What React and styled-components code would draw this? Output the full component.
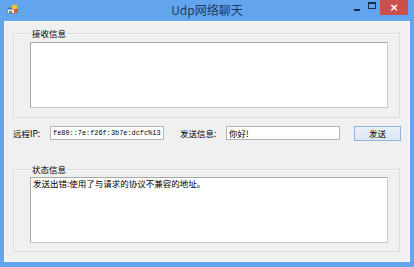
import React from "react";
import styled, { createGlobalStyle } from "styled-components";

const Global = createGlobalStyle`
  html, body { margin: 0; padding: 0; background: #62a5ee; }
  #root { width: 414px; height: 267px; }
  * { box-sizing: border-box; }
`;

const Window = styled.div`
  width: 414px;
  height: 267px;
  background: #62a5ee;
  display: flex;
  flex-direction: column;
  font-family: "Noto Sans CJK SC", "Liberation Sans", sans-serif;
  overflow: hidden;
`;

const TitleBar = styled.div`
  height: 21px;
  flex: none;
  display: flex;
  align-items: flex-start;
  position: relative;
`;

const AppIcon = styled.svg`
  margin: 4px 0 0 7px;
  flex: none;
`;

const Title = styled.div`
  position: absolute;
  left: 0;
  right: 0;
  top: 2px;
  text-align: center;
  font-size: 12px;
  line-height: 16px;
  color: #1f3a5f;
  pointer-events: none;
`;

const Controls = styled.div`
  margin-left: auto;
  margin-right: 6px;
  display: flex;
  align-items: flex-start;
  flex: none;
`;

const CtrlBtn = styled.div`
  width: ${(p) => p.$w}px;
  height: 15px;
  flex: none;
  display: flex;
  align-items: center;
  justify-content: center;
  background: ${(p) => (p.$close ? "#c9504c" : "transparent")};
  color: #fff;
  font-family: "DejaVu Sans", sans-serif;
  font-weight: bold;
  font-size: 11px;
`;

const MinGlyph = styled.div`
  width: 6px;
  height: 2px;
  background: #1d2f46;
  margin-top: 5px;
`;

const MaxGlyph = styled.div`
  width: 8px;
  height: 7px;
  border: 1px solid #1d2f46;
  border-top-width: 2px;
  margin-top: -4px;
`;

const Client = styled.div`
  flex: 1;
  margin: 0 4px 5px 4px;
  background: #f0f0f0;
  padding: 5px 9px 9px 8px;
  border: 1px solid #f7f7f7;
`;

const Group = styled.fieldset`
  margin: 0;
  min-width: 0;
  border: 1px solid #dcdcdc;
  box-shadow: inset 1px 1px 0 #fafafa;
  padding: ${(p) => p.$pt}px 11px ${(p) => p.$pb}px 16px;
`;

const Legend = styled.legend`
  margin-left: 1px;
  padding: 0 1px;
  font-size: 8.5px;
  line-height: 12px;
  color: #000;
`;

const TextArea = styled.div`
  height: ${(p) => p.$h}px;
  background: #fff;
  border: 1px solid #a9a9a9;
  border-right-color: #c8c8c8;
  border-bottom-color: #c8c8c8;
  padding: 0 2px;
  font-size: 8.5px;
  line-height: 11px;
  color: #000;
`;

const Row = styled.div`
  height: 16px;
  margin: 7px -1px 22px 0;
  display: flex;
  align-items: center;
`;

const Label = styled.span`
  font-size: 8.5px;
  color: #000;
  width: ${(p) => p.$w}px;
  margin-left: ${(p) => p.$ml || 0}px;
  white-space: nowrap;
  flex: none;
`;

const Input = styled.div`
  width: ${(p) => p.$w}px;
  height: 14px;
  flex: none;
  background: #fff;
  border: 1px solid #b4b4b4;
  display: flex;
  align-items: center;
  padding-left: 2px;
  font-family: ${(p) => (p.$mono ? '"Liberation Mono", monospace' : '"Noto Sans CJK SC", sans-serif')};
  font-size: ${(p) => (p.$mono ? "6.9px" : "8.5px")};
  color: #000;
  white-space: nowrap;
  overflow: hidden;
`;

const Button = styled.div`
  width: 47px;
  height: 15px;
  margin-left: auto;
  flex: none;
  background: linear-gradient(#e8f0f9, #dce7f4);
  border: 1px solid #8fb4de;
  display: flex;
  align-items: center;
  justify-content: center;
  font-size: 8.5px;
  color: #000;
`;

export default function App() {
  return (
    <>
      <Global />
      <Window>
        <TitleBar>
          <AppIcon width="12" height="12" viewBox="0 0 12 12">
            <rect x="0.5" y="3.5" width="7" height="6" fill="#e8eef6" stroke="#7b8fa8" />
            <rect x="1" y="4" width="6" height="1.5" fill="#3d6fc0" />
            <rect x="5" y="1" width="5" height="4" fill="#f2c43a" />
            <rect x="7" y="5" width="4" height="4" fill="#e0593a" />
            <rect x="2" y="7" width="3" height="2" fill="#4aa04a" />
          </AppIcon>
          <Title>Udp网络聊天</Title>
          <Controls>
            <CtrlBtn $w={15}><MinGlyph /></CtrlBtn>
            <CtrlBtn $w={16}><MaxGlyph /></CtrlBtn>
            <CtrlBtn $w={28} $close>×</CtrlBtn>
          </Controls>
        </TitleBar>
        <Client>
          <Group $pt={3} $pb={9}>
            <Legend>接收信息</Legend>
            <TextArea $h={66} />
          </Group>
          <Row>
            <Label $w={37}>远程IP:</Label>
            <Input $w={114} $mono>fe80::7e:f26f:3b7e:dcfc%13</Input>
            <Label $w={46} $ml={16}>发送信息:</Label>
            <Input $w={114}>你好!</Input>
            <Button>发送</Button>
          </Row>
          <Group $pt={2} $pb={8}>
            <Legend>状态信息</Legend>
            <TextArea $h={66}>发送出错:使用了与请求的协议不兼容的地址。</TextArea>
          </Group>
        </Client>
      </Window>
    </>
  );
}
